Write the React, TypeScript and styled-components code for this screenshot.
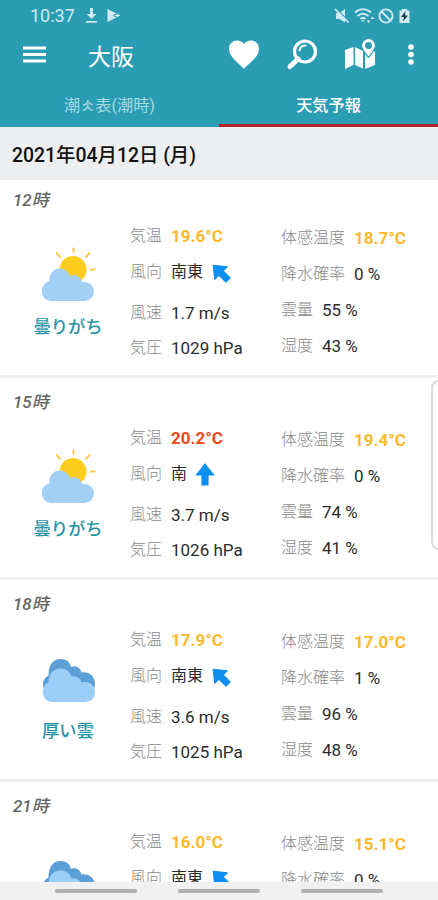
import React from "react";
import styled, { createGlobalStyle } from "styled-components";

const Global = createGlobalStyle`
  * { box-sizing: border-box; }
  html, body { margin: 0; padding: 0; overflow: hidden; background: #fff; }
  body { font-family: Roboto, "Noto Sans CJK JP", sans-serif; }
`;

const Screen = styled.div`
  position: relative;
  width: 438px;
  height: 900px;
  overflow: hidden;
  display: flex;
  flex-direction: column;
  background: #fff;
`;

const Header = styled.header`
  flex: none;
  height: 127px;
  background: #2a9db3;
  color: #fff;
  display: flex;
  flex-direction: column;
`;

const StatusBar = styled.div`
  height: 31px;
  padding: 0 26px 0 30px;
  display: flex;
  align-items: center;
  color: #cfeaf0;
  svg { display: block; }
`;

const Clock = styled.span`
  width: 55px;
  font-size: 18px;
  line-height: 31px;
`;

const StatusIcons = styled.div<{ $end?: boolean }>`
  display: flex;
  align-items: center;
  gap: ${(p) => (p.$end ? 2 : 8)}px;
  margin-left: ${(p) => (p.$end ? "auto" : "0")};
`;

const AppBar = styled.div`
  height: 48px;
  padding: 0 18px 0 22px;
  display: flex;
  align-items: center;
  svg { display: block; flex: none; }
`;

const Title = styled.h1`
  margin: 5px 0 0 41px;
  font-size: 23px;
  line-height: 30px;
  font-weight: 400;
  flex: 1;
`;

const Actions = styled.div`
  display: flex;
  align-items: center;
  gap: 26px;
`;

const Tabs = styled.nav`
  height: 48px;
  display: grid;
  grid-template-columns: 1fr 1fr;
`;

const Tab = styled.div<{ $active?: boolean }>`
  display: flex;
  align-items: center;
  justify-content: center;
  padding-top: 5px;
  font-size: 16.2px;
  font-weight: ${(p) => (p.$active ? 500 : 400)};
  color: ${(p) => (p.$active ? "#fff" : "#a6d8e1")};
  border-bottom: 3px solid ${(p) => (p.$active ? "#b7202c" : "transparent")};
`;

const SmallGlyph = styled.span`
  width: 15px;
  text-align: center;
  font-size: 12px;
  font-weight: 700;
`;

const DateBar = styled.div`
  flex: none;
  height: 53px;
  padding: 0 12px;
  display: flex;
  align-items: center;
  background: #eceef0;
  color: #111;
  font-size: 19.4px;
  font-weight: 500;
`;

const List = styled.main`
  flex: 1;
  min-height: 0;
  overflow: hidden;
`;

const Block = styled.section`
  height: 202px;
  padding-top: 12px;
  border-bottom: 3px solid #efefef;
  &:first-child { height: 198px; padding-top: 8px; }
`;

const Hour = styled.div`
  height: 24px;
  padding-left: 13px;
  line-height: 24px;
  font-size: 17px;
  font-style: italic;
  font-weight: 500;
  color: #666;
`;

const Body = styled.div`
  display: grid;
  grid-template-columns: 130px 151px 1fr;
`;

const Summary = styled.div`
  padding: 35px 0 0 6px;
  display: flex;
  flex-direction: column;
  align-items: center;
  svg { display: block; }
`;

const Condition = styled.div`
  margin-top: 12px;
  font-size: 17.3px;
  line-height: 24px;
  font-weight: 500;
  color: #2695a5;
`;

const Column = styled.div<{ $right?: boolean }>`
  padding-top: ${(p) => (p.$right ? 13 : 11)}px;
  display: flex;
  flex-direction: column;
  gap: 12px;
`;

const Row = styled.div<{ $gap?: number }>`
  height: 24px;
  margin-top: ${(p) => p.$gap ?? 0}px;
  display: flex;
  align-items: center;
  gap: 9px;
  white-space: nowrap;
`;

const Label = styled.span`
  padding-top: 2px;
  font-size: 16px;
  line-height: 24px;
  font-weight: 300;
  color: #8a8a8a;
`;

const Value = styled.span<{ $color?: string }>`
  padding-top: 1px;
  font-size: 17px;
  line-height: 24px;
  font-weight: ${(p) => (p.$color ? 700 : 400)};
  color: ${(p) => p.$color ?? "#2c2c2c"};
`;

const JpValue = styled(Value)`
  font-size: 16px;
`;

const Arrow = styled.svg<{ $angle: number }>`
  display: block;
  margin-left: -1px;
  transform: translateY(2px) rotate(${(p) => p.$angle}deg);
`;

const EdgeHandle = styled.div`
  position: absolute;
  left: 431px;
  top: 380px;
  width: 20px;
  height: 170px;
  border: 2px solid #dcdcdc;
  border-radius: 8px;
  background: #fff;
`;

const NavBar = styled.footer`
  flex: none;
  height: 18px;
  background: #f1f1f1;
  display: flex;
  justify-content: center;
  gap: 41px;
  padding-top: 7px;
`;

const NavPill = styled.div`
  width: 82px;
  height: 4px;
  border-radius: 2px;
  background: #b0b0b0;
`;

const PartlyCloudy = () => (
  <svg width="56" height="56" viewBox="0 0 56 56">
    <g stroke="#fbc72e" strokeWidth="1.8" strokeLinecap="round">
      <path d="M33.500 1.500v3.500M16.500 6l3.500 4M49.500 6l-3.500 4M51 22.500h3.500" />
    </g>
    <circle cx="33" cy="22.500" r="13.500" fill="#fdce1f" />
    <path d="M10.500 54a10 10 0 0 1-1-19.700C8.500 27 13.500 21.500 19.500 21.500c5 0 8.500 2.500 10.500 7.500 6-2 11 1 12 6h2.500a9.500 9.500 0 0 1 0 19z" fill="#a3d0f5" />
  </svg>
);

const HeavyCloud = () => (
  <svg width="56" height="56" viewBox="0 0 56 56">
    <path d="M10 43a10 10 0 0 1-1.500-18.500C8.500 14 13 8 20.500 8c6 0 9.500 3 10.500 8 5-2 9.500 1 10.500 5.500 8-1 13.500 4 13.500 11.500 0 6-4 10-10 10z" fill="#5c9fd6" />
    <path d="M10.500 51a10.500 10.500 0 0 1-2-19.500C8.500 23 13.500 17.500 20.500 17.500c6 0 9.500 3 11 8 5-1 9 2 10 6 8-2 13.500 3 13.500 9.500S50.500 51 45 51z" fill="#9ccff8" />
  </svg>
);

const WindArrow = ({ angle }: { angle: number }) => (
  <Arrow $angle={angle} width="20" height="24" viewBox="0 0 20 24">
    <path d="M10 1L18.800 12H13v10H7V12H1.200z" fill="#0d8ff0" stroke="#0d8ff0" strokeWidth="1.200" strokeLinejoin="round" />
  </Arrow>
);

const AMBER = "#fbb92b";
const RED = "#f0481a";

interface Forecast {
  hour: string;
  cloudy?: boolean;
  temp: string;
  hot?: boolean;
  wind: string;
  angle: number;
  feels: string;
  rain: number;
  details?: { speed: string; pressure: string; cloud: number; humidity: number };
}

const forecasts: Forecast[] = [
  { hour: "12", temp: "19.6", wind: "南東", angle: -45, feels: "18.7", rain: 0, details: { speed: "1.7", pressure: "1029", cloud: 55, humidity: 43 } },
  { hour: "15", temp: "20.2", hot: true, wind: "南", angle: 0, feels: "19.4", rain: 0, details: { speed: "3.7", pressure: "1026", cloud: 74, humidity: 41 } },
  { hour: "18", cloudy: true, temp: "17.9", wind: "南東", angle: -45, feels: "17.0", rain: 1, details: { speed: "3.6", pressure: "1025", cloud: 96, humidity: 48 } },
  { hour: "21", cloudy: true, temp: "16.0", wind: "南東", angle: -45, feels: "15.1", rain: 0 },
];

const ForecastBlock = ({ f }: { f: Forecast }) => (
  <Block>
    <Hour>{f.hour}時</Hour>
    <Body>
      <Summary>
        {f.cloudy ? <HeavyCloud /> : <PartlyCloudy />}
        {f.details && <Condition>{f.cloudy ? "厚い雲" : "曇りがち"}</Condition>}
      </Summary>
      <Column>
        <Row><Label>気温</Label><Value $color={f.hot ? RED : AMBER}>{f.temp}°C</Value></Row>
        <Row><Label>風向</Label><JpValue>{f.wind}</JpValue><WindArrow angle={f.angle} /></Row>
        {f.details && (
          <>
            <Row $gap={5}><Label>風速</Label><Value>{f.details.speed} m/s</Value></Row>
            <Row $gap={-1}><Label>気圧</Label><Value>{f.details.pressure} hPa</Value></Row>
          </>
        )}
      </Column>
      <Column $right>
        <Row><Label>体感温度</Label><Value $color={AMBER}>{f.feels}°C</Value></Row>
        <Row><Label>降水確率</Label><Value>{f.rain} %</Value></Row>
        {f.details && (
          <>
            <Row><Label>雲量</Label><Value>{f.details.cloud} %</Value></Row>
            <Row><Label>湿度</Label><Value>{f.details.humidity} %</Value></Row>
          </>
        )}
      </Column>
    </Body>
  </Block>
);

export default function App() {
  return (
    <Screen>
      <Global />
      <Header>
        <StatusBar>
          <Clock>10:37</Clock>
          <StatusIcons>
            <svg width="13" height="17" viewBox="0 0 13 17"><path d="M5 1h3v6h3.500L6.500 12 1.500 7H5zM1 14h11v1.800H1z" fill="currentColor" /></svg>
            <svg width="16" height="15" viewBox="0 0 16 15"><path d="M1.500 1l13 6.500-13 6.500z" fill="currentColor" /><path d="M7 7.500l5-2M7 7.500l5 2" stroke="#2a9db3" strokeWidth="1" /></svg>
          </StatusIcons>
          <StatusIcons $end>
            <svg width="16" height="16" viewBox="0 0 16 16"><path d="M2 5h3.500L11 1v13.500L5.500 11H2z" fill="currentColor" /><path d="M2.500 1L15 13.500" stroke="#2a9db3" strokeWidth="1.500" /><path d="M1 1l13.500 13.500" stroke="currentColor" strokeWidth="1.700" /></svg>
            <svg width="24" height="17" viewBox="0 0 24 17"><g fill="none" stroke="currentColor" strokeWidth="1.900"><path d="M3 5.500c5-4.500 11-4.500 16 0M5.500 9c3.500-3 7.500-3 11 0M8.500 12c1.500-1.500 3.500-1.500 5 0" /></g><path d="M9.500 13h3L11 15zM14.500 13.500h4L16.500 16zM18.500 12l2-2.500 2 2.500z" fill="currentColor" /></svg>
            <svg width="16" height="16" viewBox="0 0 16 16"><circle cx="8" cy="8" r="6.600" fill="none" stroke="currentColor" strokeWidth="1.900" /><path d="M3.500 3.500l9 9" stroke="currentColor" strokeWidth="1.900" /></svg>
            <svg width="16" height="16" viewBox="0 0 16 16"><path d="M3.500 2.500H6V1h5v1.500h2.500V15h-10z" fill="currentColor" /><path d="M9.500 3L5 9h3l-1 4.500L12 7.500H9z" fill="#173f49" /></svg>
          </StatusIcons>
        </StatusBar>
        <AppBar>
          <svg width="25" height="18" viewBox="0 0 25 18"><path d="M1 .5h23v2.900H1zM1 7h23v2.900H1zM1 13.500h23v2.900H1z" fill="#fff" /></svg>
          <Title>大阪</Title>
          <Actions>
            <svg width="32" height="32" viewBox="0 0 32 32"><path d="M16 30C12 25 1 18.500 1 10 1 .5 12-1 16 5c4-6 15-4.500 15 5C31 18.500 20 25 16 30z" fill="#fff" /></svg>
            <svg width="32" height="32" viewBox="0 0 32 32"><circle cx="19" cy="12.500" r="10.500" fill="none" stroke="#fff" strokeWidth="3.200" /><path d="M12 20l-8 7.500" stroke="#fff" strokeWidth="5" strokeLinecap="round" /><path d="M13.500 11.500c.5-3 3-5 6-5" fill="none" stroke="#fff" strokeWidth="2" strokeLinecap="round" /></svg>
            <svg width="32" height="32" viewBox="0 0 32 32">
              <path d="M1 11l8.500-3v18L1 30zM11 8l8 4v17.500l-8-3.500zM21 12.500h10V26l-10 4z" fill="#fff" />
              <path fillRule="evenodd" d="M24.500-.5a7 7 0 0 1 7 7c0 4-4 7.500-7 12-3-4.500-7-8-7-12a7 7 0 0 1 7-7zm0 4.200a2.900 2.900 0 1 0 0 5.800 2.900 2.900 0 0 0 0-5.800z" fill="#fff" stroke="#2a9db3" strokeWidth="1.200" />
              <circle cx="24.500" cy="6.600" r="2.900" fill="#2a9db3" />
            </svg>
            <svg width="18" height="24" viewBox="0 0 18 24"><g fill="#fff"><circle cx="9" cy="4" r="2.800" /><circle cx="9" cy="11.500" r="2.800" /><circle cx="9" cy="19" r="2.800" /></g></svg>
          </Actions>
        </AppBar>
        <Tabs>
          <Tab>潮<SmallGlyph>仌</SmallGlyph>表(潮時)</Tab>
          <Tab $active>天気予報</Tab>
        </Tabs>
      </Header>
      <DateBar>2021年04月12日 (月)</DateBar>
      <List>
        {forecasts.map((f) => <ForecastBlock key={f.hour} f={f} />)}
      </List>
      <NavBar><NavPill /><NavPill /><NavPill /></NavBar>
      <EdgeHandle />
    </Screen>
  );
}
